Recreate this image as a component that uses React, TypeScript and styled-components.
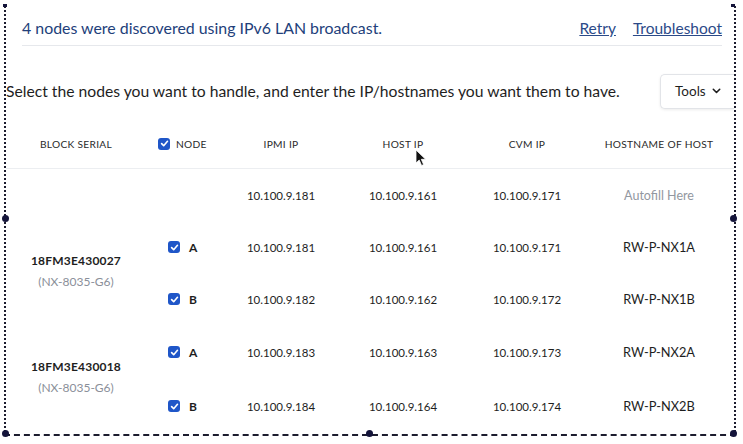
import React from "react";
import styled, { createGlobalStyle } from "styled-components";

const GlobalStyle = createGlobalStyle`
  html, body {
    margin: 0;
    padding: 0;
    background: #ffffff;
  }
  body {
    font-family: Lato, "Open Sans", "Liberation Sans", sans-serif;
    color: #1e1e1e;
  }
`;

const Page = styled.div`
  width: 743px;
  height: 444px;
  overflow: hidden;
  position: relative;
  background: #fff;
`;

const Frame = styled.div`
  position: relative;
  margin: 6px 0 0 4px;
  width: 732px;
  height: 430px;
  border-left: 2px dotted #1c1c2e;
  border-right: 2px dotted #1c1c2e;
  border-bottom: 2px dashed #1c1c2e;
  box-sizing: border-box;
`;

const Handle = styled.span<{ $x: string; $y: string }>`
  position: absolute;
  left: ${(p) => p.$x};
  top: ${(p) => p.$y};
  width: 7px;
  height: 7px;
  margin: -4px 0 0 -4px;
  border-radius: 50%;
  background: #14143a;
`;

const CornerTick = styled.span<{ $x: string }>`
  position: absolute;
  left: ${(p) => p.$x};
  top: -2px;
  width: 4px;
  height: 3px;
  margin-left: -3px;
  background: #14143a;
`;

const Notice = styled.div`
  margin: 0 12px 0 16px;
  height: 39px;
  display: flex;
  align-items: center;
  border-bottom: 1px solid #e6e8ec;
  font-size: 15.9px;
  color: #22407a;
`;

const NoticeText = styled.span`
  flex: 1;
  padding-top: 4px;
`;

const LinkText = styled.a`
  color: #2b4a88;
  text-decoration: underline;
  margin-left: 17px;
  padding-top: 4px;
  font-size: 15.5px;
  cursor: pointer;
`;

const Intro = styled.div`
  display: flex;
  align-items: center;
  justify-content: space-between;
  margin-top: 27px;
  height: 36px;
`;

const IntroText = styled.span`
  font-size: 15.7px;
  color: #1e1e1e;
`;

const ToolsButton = styled.button`
  display: flex;
  align-items: center;
  gap: 6px;
  height: 35px;
  width: 74px;
  padding: 0 0 0 14px;
  border: 1px solid #e2e4e8;
  border-right: none;
  border-radius: 5px 0 0 5px;
  background: #fff;
  box-shadow: 0 1px 3px rgba(0, 0, 0, 0.08);
  font-family: inherit;
  font-size: 13.5px;
  color: #1e1e1e;
`;

const Grid = styled.div`
  display: grid;
  grid-template-columns: 140px 80px 110px 134px 114px 1fr;
  grid-template-rows: 50px 52px 52px 52px 54px 54px;
  margin-top: 10px;
`;

const HeadCell = styled.div<{ $pad?: number }>`
  display: flex;
  align-items: center;
  justify-content: ${(p) => (p.$pad !== undefined ? "flex-start" : "center")};
  padding-left: ${(p) => p.$pad ?? 0}px;
  gap: 6px;
  font-size: 10.2px;
  letter-spacing: 0.3px;
  text-transform: uppercase;
  color: #2a2a2a;
  border-bottom: 1px solid #eceef1;
`;

const Cell = styled.div<{ $muted?: boolean; $name?: boolean }>`
  display: flex;
  align-items: center;
  justify-content: center;
  font-size: ${(p) => (p.$muted ? 12.5 : p.$name ? 12.8 : 11.5)}px;
  color: ${(p) => (p.$muted ? "#9297a0" : "#1e1e1e")};
`;

const NodeCell = styled.div`
  display: flex;
  align-items: center;
  gap: 9px;
  padding-left: 22px;
  font-size: 12px;
  font-weight: 700;
  color: #1e1e1e;
`;

const SerialCell = styled.div`
  grid-row: span 2;
  display: flex;
  flex-direction: column;
  align-items: center;
  justify-content: center;
  gap: 6px;
  padding-bottom: 4px;
`;

const Serial = styled.div`
  font-size: 12px;
  font-weight: 700;
  letter-spacing: 0.2px;
  color: #1e1e1e;
`;

const Model = styled.div`
  font-size: 12px;
  color: #8a8f99;
`;

const Box = styled.span`
  width: 12px;
  height: 12px;
  border-radius: 3px;
  background: #1f56c8;
  display: inline-flex;
  align-items: center;
  justify-content: center;
  flex-shrink: 0;
`;

const Check = () => (
  <Box>
    <svg width="9" height="9" viewBox="0 0 10 10">
      <path d="M1.8 5.2 L4.1 7.4 L8.3 2.6" fill="none" stroke="#fff" strokeWidth="1.8" strokeLinecap="round" strokeLinejoin="round" />
    </svg>
  </Box>
);

const Cursor = styled.svg`
  position: absolute;
  left: 409px;
  top: 143px;
`;

type Node = { node: string; ipmi: string; host: string; cvm: string; name: string };
type Block = { serial: string; model: string; nodes: Node[] };

const blocks: Block[] = [
  {
    serial: "18FM3E430027",
    model: "(NX-8035-G6)",
    nodes: [
      { node: "A", ipmi: "10.100.9.181", host: "10.100.9.161", cvm: "10.100.9.171", name: "RW-P-NX1A" },
      { node: "B", ipmi: "10.100.9.182", host: "10.100.9.162", cvm: "10.100.9.172", name: "RW-P-NX1B" },
    ],
  },
  {
    serial: "18FM3E430018",
    model: "(NX-8035-G6)",
    nodes: [
      { node: "A", ipmi: "10.100.9.183", host: "10.100.9.163", cvm: "10.100.9.173", name: "RW-P-NX2A" },
      { node: "B", ipmi: "10.100.9.184", host: "10.100.9.164", cvm: "10.100.9.174", name: "RW-P-NX2B" },
    ],
  },
];

export default function App() {
  return (
    <Page>
      <GlobalStyle />
      <Frame>
        <CornerTick $x="0px" />
        <CornerTick $x="100%" />
        <Handle $x="0px" $y="213px" />
        <Handle $x="100%" $y="213px" />
        <Handle $x="0px" $y="100%" />
        <Handle $x="50%" $y="100%" />
        <Handle $x="100%" $y="100%" />

        <Notice>
          <NoticeText>4 nodes were discovered using IPv6 LAN broadcast.</NoticeText>
          <LinkText>Retry</LinkText>
          <LinkText>Troubleshoot</LinkText>
        </Notice>

        <Intro>
          <IntroText>Select the nodes you want to handle, and enter the IP/hostnames you want them to have.</IntroText>
          <ToolsButton>
            Tools
            <svg width="9" height="6" viewBox="0 0 9 6">
              <path d="M1.3 1.3 L4.5 4.5 L7.7 1.3" fill="none" stroke="#1e1e1e" strokeWidth="1.6" strokeLinecap="round" strokeLinejoin="round" />
            </svg>
          </ToolsButton>
        </Intro>

        <Grid>
          <HeadCell>Block Serial</HeadCell>
          <HeadCell $pad={12}>
            <Check />
            Node
          </HeadCell>
          <HeadCell>IPMI IP</HeadCell>
          <HeadCell>Host IP</HeadCell>
          <HeadCell>CVM IP</HeadCell>
          <HeadCell>Hostname of Host</HeadCell>

          <Cell />
          <Cell />
          <Cell>10.100.9.181</Cell>
          <Cell>10.100.9.161</Cell>
          <Cell>10.100.9.171</Cell>
          <Cell $muted>Autofill Here</Cell>

          {blocks.map((b) =>
            b.nodes.map((n, i) => (
              <React.Fragment key={b.serial + n.node}>
                {i === 0 && (
                  <SerialCell>
                    <Serial>{b.serial}</Serial>
                    <Model>{b.model}</Model>
                  </SerialCell>
                )}
                <NodeCell>
                  <Check />
                  {n.node}
                </NodeCell>
                <Cell>{n.ipmi}</Cell>
                <Cell>{n.host}</Cell>
                <Cell>{n.cvm}</Cell>
                <Cell $name>{n.name}</Cell>
              </React.Fragment>
            ))
          )}
        </Grid>

        <Cursor width="12" height="18" viewBox="0 0 12 18">
          <path d="M1 1 L1 14 L4.2 11 L6.6 16.5 L8.6 15.6 L6.3 10.3 L10.6 10.3 Z" fill="#111" stroke="#fff" strokeWidth="0.8" />
        </Cursor>
      </Frame>
    </Page>
  );
}
